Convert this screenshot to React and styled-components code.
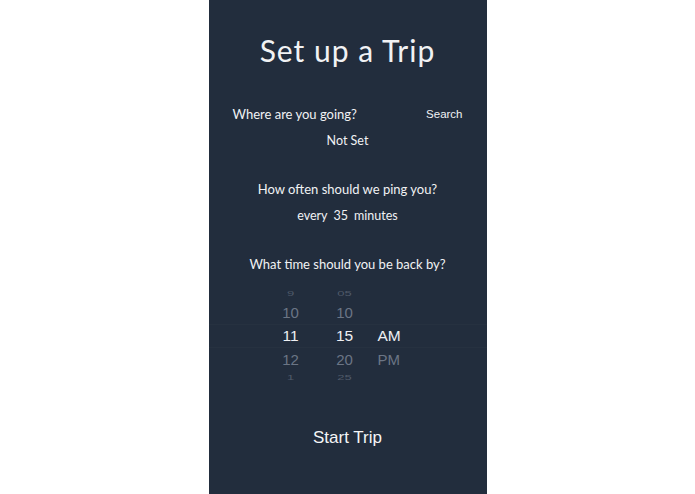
import React from 'react';
import styled, { createGlobalStyle } from 'styled-components';

const GlobalStyle = createGlobalStyle`
    html, body {
        margin: 0;
        padding: 0;
        background: #fff;
        height: 100%;
    }
    #root {
        height: 100%;
    }
`

const Page = styled.div`
    display: flex;
    justify-content: center;
    height: 100vh;
    background: #fff;
`

const Panel = styled.div`
    display: flex;
    flex-direction: column;
    width: 278px;
    height: 100%;
    background: #222d3d;
    color: #f1f2f4;
    font-family: Lato, "Noto Sans", sans-serif;
    padding-top: 30px;
    box-sizing: border-box;
`

const Title = styled.h1`
    margin: 0;
    font-size: 30px;
    font-weight: 400;
    line-height: 40px;
    text-align: center;
    letter-spacing: 1px;
`

const Question = styled.div`
    display: flex;
    justify-content: ${p => p.split ? 'space-between' : 'center'};
    align-items: center;
    padding: 0 24px;
    margin-top: ${p => p.top}px;
    font-size: 13px;
    line-height: 20px;
`

const Value = styled.div`
    display: flex;
    justify-content: center;
    gap: ${p => p.gap || 0}px;
    margin-top: 7px;
    font-size: 12.5px;
    line-height: 20px;
`

const SearchLink = styled.span`
    font-family: "Liberation Sans", Arial, sans-serif;
    font-size: 11.5px;
`

const Picker = styled.div`
    display: flex;
    flex-direction: column;
    margin-top: 12px;
    font-family: "Liberation Sans", Arial, sans-serif;
`

const PickerRow = styled.div`
    display: grid;
    grid-template-columns: 40px 40px 50px;
    column-gap: 14px;
    align-items: center;
    padding-left: 62px;
    height: ${p => p.h}px;
    font-size: ${p => p.size}px;
    color: ${p => p.color};
    border-top: ${p => p.selected ? '1px solid rgba(255,255,255,0.02)' : 'none'};
    border-bottom: ${p => p.selected ? '1px solid rgba(255,255,255,0.02)' : 'none'};
    box-sizing: border-box;
    overflow: hidden;

    span {
        display: block;
        text-align: center;
        transform: scaleY(${p => p.squash || 1});
    }
    span.ampm {
        text-align: left;
        margin-left: -1px;
    }
`

const StartButton = styled.button`
    margin-top: 44px;
    align-self: center;
    background: none;
    border: none;
    padding: 0;
    color: #f4f5f7;
    font-family: "Liberation Sans", Arial, sans-serif;
    font-size: 17px;
    line-height: 24px;
    cursor: pointer;
`

const rows = [
    { h: 14, size: 13, color: '#4f5969', squash: 0.55, cells: ['9', '05', ''] },
    { h: 24, size: 15, color: '#6b7585', cells: ['10', '10', ''] },
    { h: 24, size: 15.5, color: '#eef0f3', selected: true, cells: ['11', '15', 'AM'] },
    { h: 22, size: 15, color: '#6b7585', cells: ['12', '20', 'PM'] },
    { h: 12, size: 13, color: '#4f5969', squash: 0.55, cells: ['1', '25', ''] },
]

const App = () => (
    <Page>
        <GlobalStyle />
        <Panel>
            <Title>Set up a Trip</Title>
            <Question split top={34}>
                <span>Where are you going?</span>
                <SearchLink>Search</SearchLink>
            </Question>
            <Value>Not Set</Value>
            <Question top={28}>How often should we ping you?</Question>
            <Value gap={6}>
                <span>every</span>
                <span>35</span>
                <span>minutes</span>
            </Value>
            <Question top={28}>What time should you be back by?</Question>
            <Picker>
                {rows.map((r, i) => (
                    <PickerRow key={i} h={r.h} size={r.size} color={r.color} squash={r.squash} selected={r.selected}>
                        <span>{r.cells[0]}</span>
                        <span>{r.cells[1]}</span>
                        <span className="ampm">{r.cells[2]}</span>
                    </PickerRow>
                ))}
            </Picker>
            <StartButton>Start Trip</StartButton>
        </Panel>
    </Page>
)

export default App;
